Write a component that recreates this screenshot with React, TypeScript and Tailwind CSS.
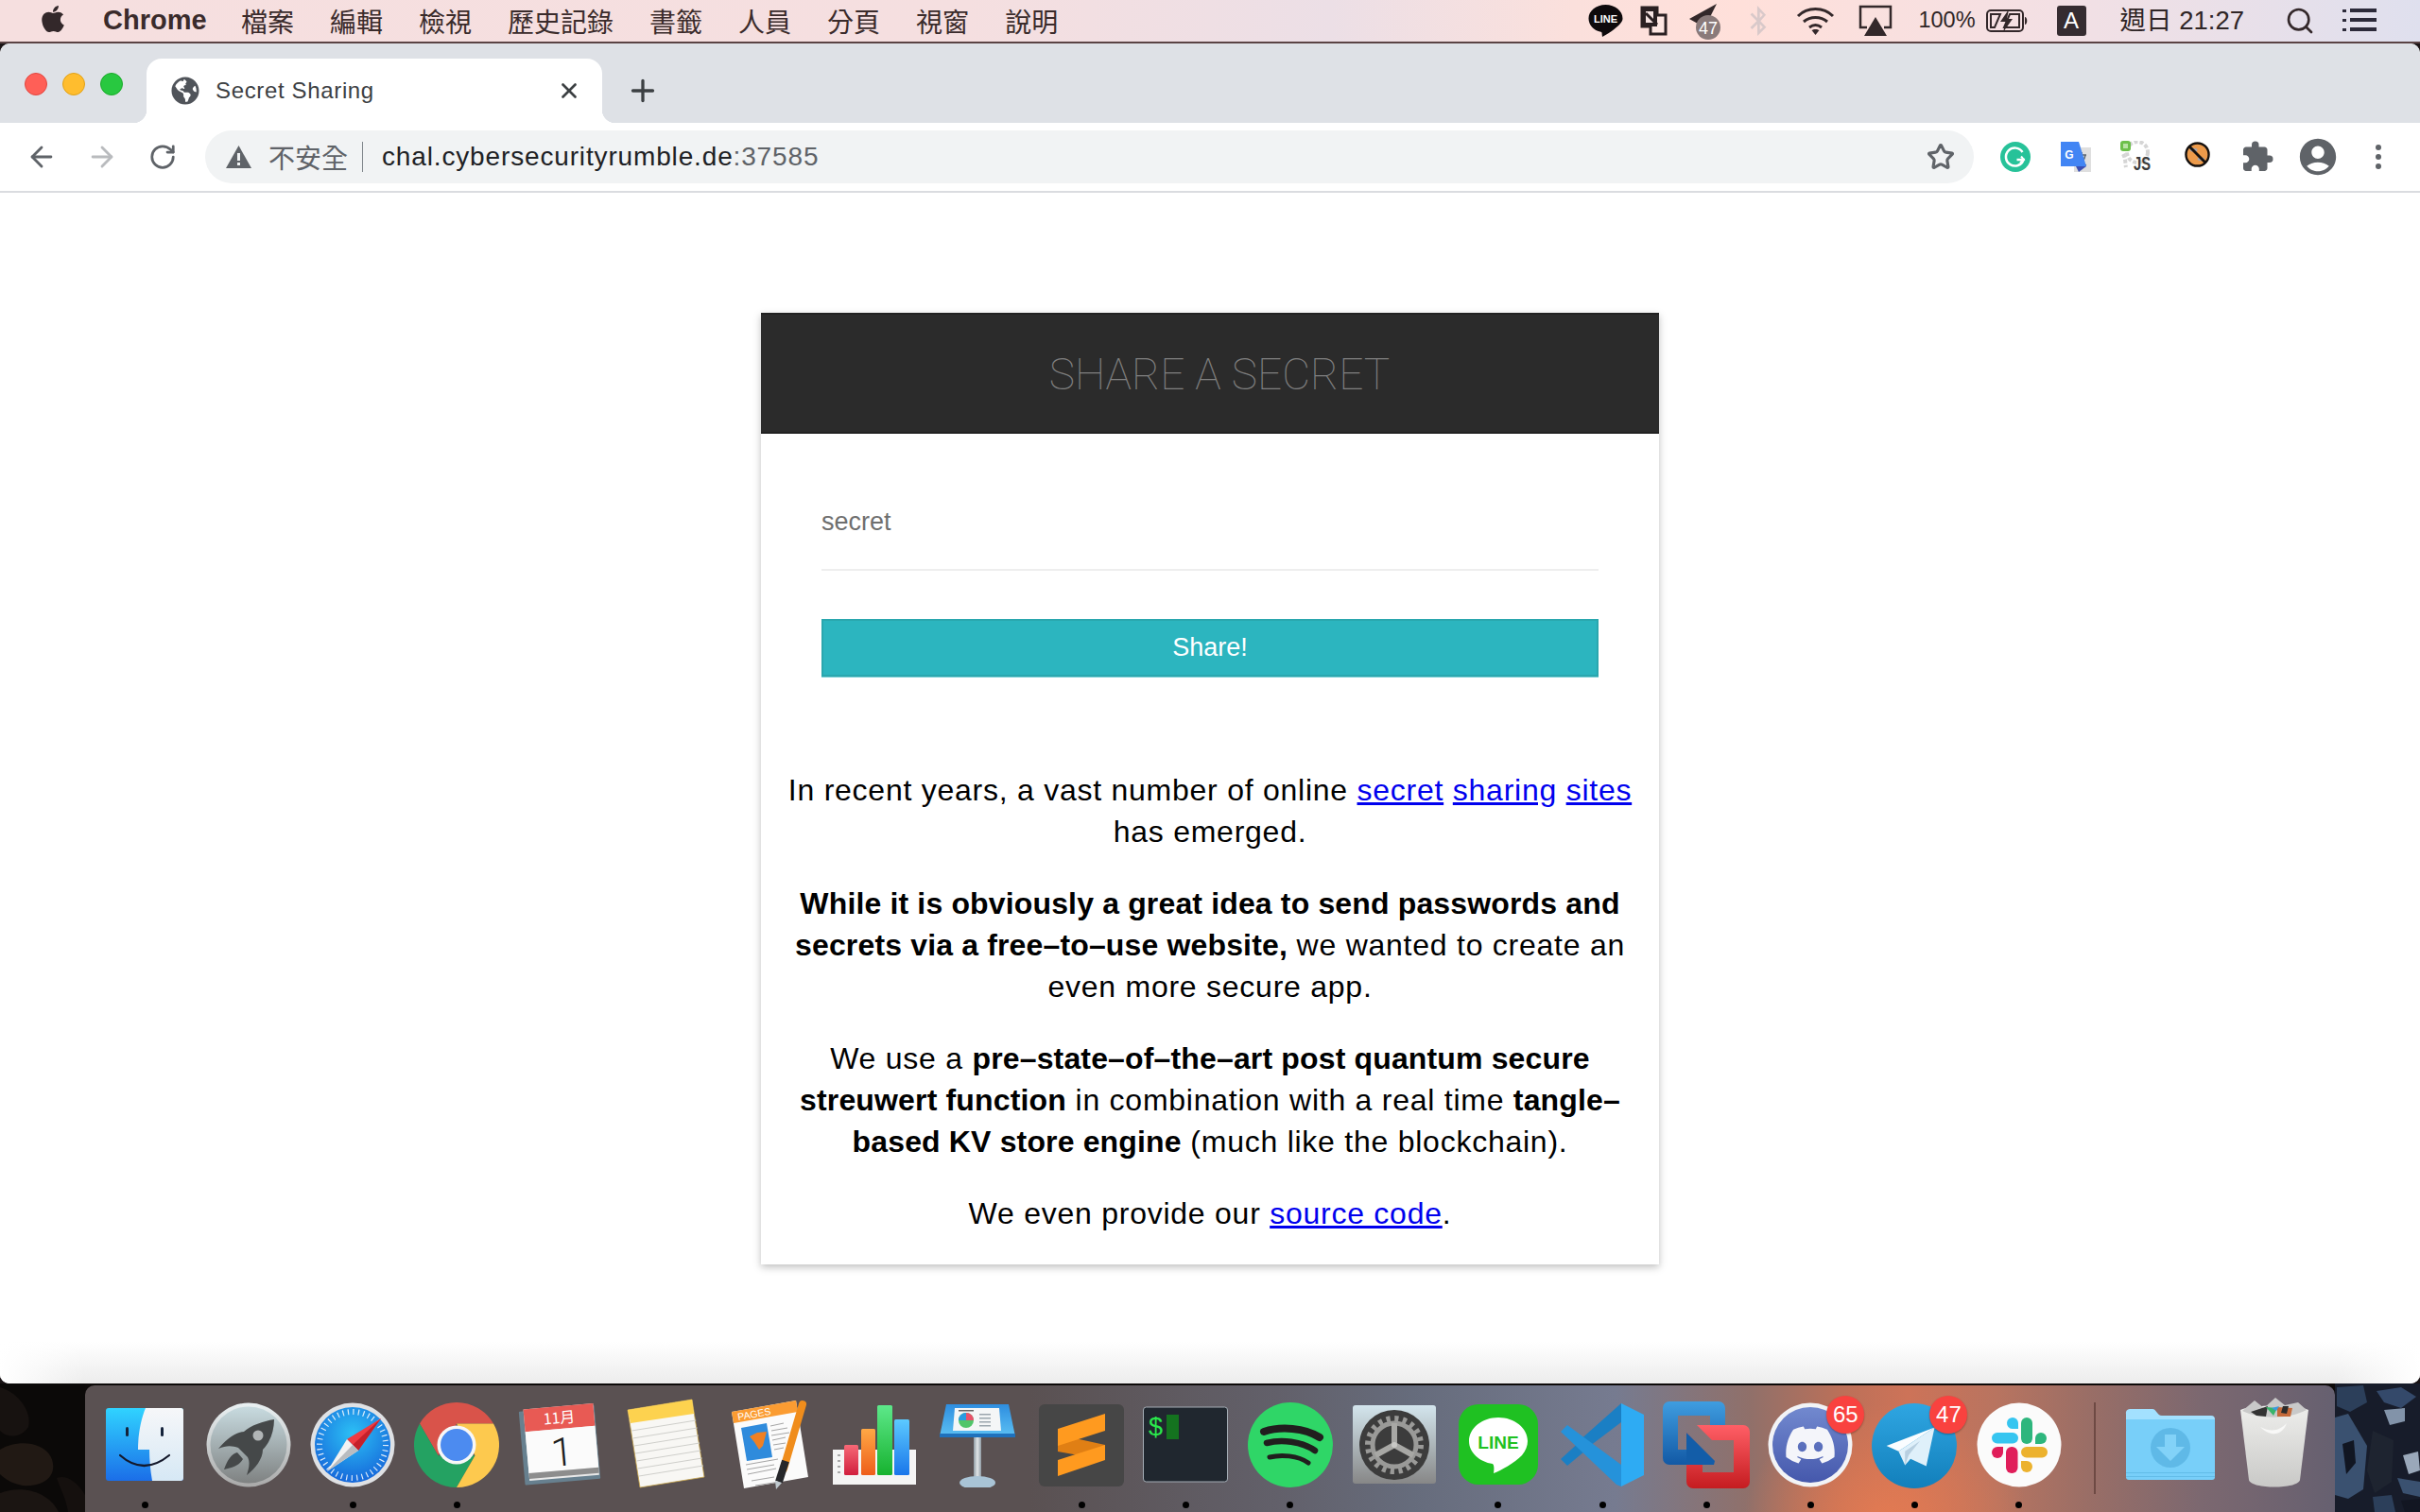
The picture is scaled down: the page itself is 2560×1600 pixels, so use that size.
import React from "react";
import { ArrowLeft, ArrowRight, RotateCw, Star, Plus, X, Search } from "lucide-react";
import { FaApple, FaBluetoothB, FaDiscord, FaGlobeAmericas } from "react-icons/fa";
import { MdAccountCircle, MdExtension } from "react-icons/md";

const menus = ["檔案", "編輯", "檢視", "歷史記錄", "書籤", "人員", "分頁", "視窗", "說明"];

function AppleMenu() {
  return (
    <div className="flex items-center h-full pl-[40px] text-[#3a2b2b]">
      <FaApple size={32} className="text-[#33282a] -mt-[4px]" />
      <span className="ml-[37px] w-[108px] text-[29px] font-bold whitespace-nowrap font-['Liberation_Sans',sans-serif]">Chrome</span>
      <div className="ml-[38px] flex gap-[38px] text-[28px] leading-none font-['Noto_Sans_CJK_TC',sans-serif]">
        {menus.map((m) => (
          <span key={m} className="whitespace-nowrap">{m}</span>
        ))}
      </div>
    </div>
  );
}

function StatusItems() {
  return (
    <div className="flex items-center h-full pr-[46px] text-[#2f2526] font-['Liberation_Sans','Noto_Sans_CJK_TC',sans-serif]">
      <svg width="37" height="36" viewBox="0 0 37 36">
        <path d="M18.5 1C8.5 1 .5 7.5.5 15.500c0 7 5.500 13 13 14.200 1 .2 1.200 1 1.200 3L15 35c4-2 14-8.200 19-14 1.700-2 2.500-3.500 2.500-5.500C36.500 7.500 28.500 1 18.500 1z" fill="#0e0a0c" />
        <text x="18.500" y="20" textAnchor="middle" fontSize="11" fontWeight="700" fill="#fff" fontFamily="Liberation Sans">LINE</text>
      </svg>
      <svg className="ml-[18px]" width="29" height="32" viewBox="0 0 29 32">
        <path d="M2 2h16v8h9v20H11v-8H2z" fill="#fff" fillOpacity=".2" stroke="#2a2022" strokeWidth="3" />
        <path d="M2 2h16v20H2z" fill="#2a2022" />
        <path d="M6 6h8v12H6z" fill="#f5e3e2" />
        <path d="M6 8l12 12" stroke="#2a2022" strokeWidth="3" />
      </svg>
      <svg className="ml-[22px]" width="37" height="40" viewBox="0 0 37 40">
        <path d="M30 2L1 18l9 5 3 9 5-6z" fill="#33282a" />
        <circle cx="21" cy="27" r="13" fill="#8a7a7a" />
        <text x="21" y="34" textAnchor="middle" fontSize="18" fill="#fff" fontFamily="Liberation Sans">47</text>
      </svg>
      <FaBluetoothB size={32} className="ml-[21px] text-[#d9c9ca]" />
      <svg className="ml-[24px]" width="41" height="32" viewBox="0 0 41 32" fill="none" stroke="#33282a" strokeWidth="3">
        <path d="M2 11c10-10 27-10 37 0" />
        <path d="M8 17c7-6 18-6 25 0" />
        <path d="M14 23c4-3 9-3 13 0" />
        <path d="M20.500 31l-4-5c2-1.500 6-1.500 8 0z" fill="#33282a" stroke="none" />
      </svg>
      <svg className="ml-[25px]" width="36" height="34" viewBox="0 0 36 34">
        <path d="M9 24H2V2h32v22h-7" fill="none" stroke="#33282a" strokeWidth="2.500" />
        <path d="M18 13l12 20H6z" fill="#33282a" />
      </svg>
      <span className="ml-[27px] text-[23.5px] whitespace-nowrap">100%</span>
      <svg className="ml-[11px]" width="45" height="26" viewBox="0 0 45 26">
        <rect x="1" y="2" width="38" height="22" rx="4" fill="none" stroke="#33282a" strokeWidth="2" />
        <path d="M5 6H15L9 20H5ZM25 6H35V20H19Z" fill="none" stroke="#33282a" strokeWidth="2" />
        <path d="M41 9c3 0 3 8 0 8z" fill="#33282a" />
        <path d="M24 1L15 14h6l-3 11 10-14h-6z" fill="#33282a" />
      </svg>
      <span className="ml-[30px] w-[31px] h-[32px] rounded-[3px] bg-[#352c30] text-white text-[24px] flex items-center justify-center">A</span>
      <span className="ml-[36px] text-[27.500px] whitespace-nowrap">週日 21:27</span>
      <Search size={32} strokeWidth={2} className="ml-[43px] text-[#33282a]" />
      <svg className="ml-[29px]" width="36" height="26" viewBox="0 0 36 26" fill="#2c2a3a">
        <rect x="0" y="1" width="4" height="3" /><rect x="8" y="0" width="28" height="4" />
        <rect x="0" y="11" width="4" height="3" /><rect x="8" y="10" width="28" height="4" />
        <rect x="0" y="21" width="4" height="3" /><rect x="8" y="20" width="28" height="4" />
      </svg>
    </div>
  );
}

function GrammarlyIcon() {
  return (
    <svg width="32" height="32" viewBox="0 0 32 32">
      <circle cx="16" cy="16" r="16" fill="#27c299" />
      <path d="M23.500 11a9.500 9.500 0 1 0 1 8h-7" fill="none" stroke="#fff" strokeWidth="2.500" />
      <path d="M22 15.500l3 3.500-4 3" fill="none" stroke="#fff" strokeWidth="2" />
    </svg>
  );
}

function TranslateIcon() {
  return (
    <svg width="32" height="32" viewBox="0 0 32 32">
      <rect x="14" y="6" width="18" height="26" fill="#dfdfdf" />
      <path d="M22 11v3m-5 0h10m-8 11c4-3 6-6 7-11m-6 4c2 3 4 6 7 7" stroke="#5c6670" strokeWidth="1.500" fill="none" />
      <path d="M0 0h19l8 26H0z" fill="#4285f4" />
      <path d="M16 26h11l-8 6z" fill="#3b4fb3" />
      <text x="9" y="18" textAnchor="middle" fontSize="12" fontWeight="700" fill="#fff" fontFamily="Liberation Sans">G</text>
    </svg>
  );
}

function JsIcon() {
  return (
    <svg width="34" height="34" viewBox="0 0 34 34">
      <circle cx="18" cy="12" r="11" fill="none" stroke="#d5d5d5" strokeWidth="4" strokeDasharray="4 2" />
      <path d="M3 14c3 6 2 10 3 14" stroke="#d5d5d5" strokeWidth="4" fill="none" strokeDasharray="4 2" />
      <rect x="0" y="0" width="11" height="11" rx="3" fill="#6cc04a" />
      <rect x="3" y="3" width="5" height="5" fill="#b9e3a5" />
      <text x="14" y="31" fontSize="20" fontWeight="700" fill="#3c3c3c" fontFamily="Liberation Sans" textLength="18" lengthAdjust="spacingAndGlyphs">JS</text>
    </svg>
  );
}

function BlockIcon() {
  return (
    <svg width="27" height="27" viewBox="0 0 28 28" className="-mt-[5px]">
      <circle cx="14" cy="14" r="12.500" fill="#ec9a4a" stroke="#15110f" strokeWidth="2.500" />
      <ellipse cx="10" cy="9" rx="4" ry="2" fill="#a5a5ad" />
      <ellipse cx="18" cy="19" rx="4" ry="2" fill="#a5a5ad" />
      <path d="M5 5l18 18" stroke="#15110f" strokeWidth="3" />
    </svg>
  );
}

function DotsMenu() {
  return (
    <svg width="8" height="28" viewBox="0 0 8 28" fill="#5f6368">
      <circle cx="4" cy="4" r="3" /><circle cx="4" cy="14" r="3" /><circle cx="4" cy="24" r="3" />
    </svg>
  );
}

function TabStrip() {
  return (
    <div className="h-[84px] bg-[#dee1e6] flex rounded-t-[10px]">
      <div className="w-[155px] pl-[26px] pt-[2px] flex items-center gap-[16px]">
        <span className="w-[24px] h-[24px] rounded-full bg-[#ff5f57] border border-[#e2463f]" />
        <span className="w-[24px] h-[24px] rounded-full bg-[#ffbd2e] border border-[#e1a116]" />
        <span className="w-[24px] h-[24px] rounded-full bg-[#28c840] border border-[#1aab29]" />
      </div>
      <div className="mt-[16px] h-[68px] w-[482px] relative bg-white rounded-t-[16px] flex items-center pl-[26px] pr-[22px] font-['Liberation_Sans',sans-serif]">
        <span className="absolute bottom-0 -left-[14px] w-[14px] h-[14px] bg-[radial-gradient(circle_at_0_0,transparent_14px,white_14.500px)]" />
        <span className="absolute bottom-0 -right-[14px] w-[14px] h-[14px] bg-[radial-gradient(circle_at_100%_0,transparent_14px,white_14.500px)]" />
        <FaGlobeAmericas size={30} className="text-[#50545a] shrink-0" />
        <span className="ml-[17px] text-[24px] tracking-[0.65px] text-[#3c4043] whitespace-nowrap">Secret Sharing</span>
        <X size={26} strokeWidth={2.500} className="ml-auto text-[#3c4043]" />
      </div>
      <div className="mt-[16px] h-[68px] ml-[25px] flex items-center">
        <Plus size={36} strokeWidth={2.200} className="text-[#3c4043]" />
      </div>
    </div>
  );
}

function NavSlot({ children }: { children: React.ReactNode }) {
  return <div className="w-[64px] h-full flex items-center justify-center shrink-0">{children}</div>;
}

function Toolbar() {
  return (
    <div className="h-[74px] bg-white border-b-2 border-[#dadce0] flex items-center pl-[12px] shrink-0">
      <NavSlot><ArrowLeft size={34} strokeWidth={2} className="text-[#5f6368]" /></NavSlot>
      <NavSlot><ArrowRight size={34} strokeWidth={2} className="text-[#b9bbbe]" /></NavSlot>
      <NavSlot><RotateCw size={30} strokeWidth={2.200} className="text-[#5f6368]" /></NavSlot>
      <div className="ml-[13px] w-[1871px] h-[56px] rounded-full bg-[#f1f3f4] flex items-center pl-[22px] pr-[20px] font-['Liberation_Sans','Noto_Sans_CJK_TC',sans-serif] text-[28px]">
        <svg width="27" height="24" viewBox="0 0 27 24"><path d="M13.500 0L27 24H0z" fill="#5f6368" /><rect x="12" y="8" width="3" height="8" fill="#f1f3f4" /><rect x="12" y="18" width="3" height="3" fill="#f1f3f4" /></svg>
        <span className="ml-[18px] text-[#5f6368] whitespace-nowrap font-['Noto_Sans_CJK_TC',sans-serif] leading-none">不安全</span>
        <span className="ml-[15px] w-[1px] h-[32px] bg-[#80868b]" />
        <span className="ml-[20px] text-[#202124] whitespace-nowrap tracking-[0.85px]">chal.cybersecurityrumble.de<span className="text-[#5f6368]">:37585</span></span>
        <Star size={30} strokeWidth={2.500} className="ml-auto text-[#5f6368]" />
      </div>
      <div className="ml-[12px] flex items-center">
        <NavSlot><GrammarlyIcon /></NavSlot>
        <NavSlot><TranslateIcon /></NavSlot>
        <NavSlot><JsIcon /></NavSlot>
        <NavSlot><BlockIcon /></NavSlot>
        <NavSlot><MdExtension size={36} className="text-[#5f6368]" /></NavSlot>
        <NavSlot><MdAccountCircle size={46} className="text-[#5f6368]" /></NavSlot>
        <NavSlot><DotsMenu /></NavSlot>
      </div>
    </div>
  );
}

function Card() {
  return (
    <div className="mt-[127px] w-[950px] bg-white shadow-[0_3px_8px_rgba(0,0,0,0.25)] font-['Liberation_Sans',sans-serif]">
      <div className="h-[128px] bg-[#2b2b2b] border-y-2 border-[#222222] flex items-center justify-center pl-[20px] pt-[2px]">
        <h1 className="text-[46px] font-thin text-[#808080] font-['Roboto',sans-serif] whitespace-nowrap">SHARE A SECRET</h1>
      </div>
      <form className="px-[64px] pt-[59px]">
        <div className="h-[86px] border-b-2 border-[#eeeeee]">
          <div className="h-[68px] flex items-center text-[27px] text-[#6f6f6f]">secret</div>
        </div>
        <div className="mt-[51px] h-[61px] bg-[#2cb5bf] border-2 border-[#2aa7ae] shadow-[0_1px_0_#7fd0d6] flex items-center justify-center text-white text-[27px]">Share!</div>
      </form>
      <div className="pt-[66px] px-[26px] pb-[32px] text-center text-[32px] leading-[44px] text-black tracking-[0.75px]">
        <p className="mt-[32px]">
          In recent years, a vast number of online{" "}
          <a className="text-[#0000ee] underline" href="#a">secret</a>{" "}
          <a className="text-[#0000ee] underline" href="#b">sharing</a>{" "}
          <a className="text-[#0000ee] underline" href="#c">sites</a> has emerged.
        </p>
        <p className="mt-[32px]">
          <b className="tracking-[0.15px]">While it is obviously a great idea to send passwords and secrets via a free–to–use website,</b> we wanted to create an even more secure app.
        </p>
        <p className="mt-[32px]">
          We use a <b className="tracking-[0.15px]">pre–state–of–the–art post quantum secure streuwert function</b> in combination with a real time <b className="tracking-[0.15px]">tangle–based KV store engine</b> (much like the blockchain).
        </p>
        <p className="mt-[32px]">
          We even provide our <a className="text-[#0000ee] underline" href="#d">source code</a>.
        </p>
      </div>
    </div>
  );
}

/* ---------- dock icons: each one is a 90x90 drawing ---------- */
function Finder() {
  return (
    <svg width="90" height="90" viewBox="0 0 90 90">
      <defs>
        <linearGradient id="fb" x1="0" y1="0" x2="0" y2="1"><stop offset="0" stopColor="#30d3ff" /><stop offset="1" stopColor="#1b6ee8" /></linearGradient>
        <linearGradient id="fw" x1="0" y1="0" x2="0" y2="1"><stop offset="0" stopColor="#f6f7f9" /><stop offset="1" stopColor="#d6e8f5" /></linearGradient>
      </defs>
      <rect x="4" y="6" width="82" height="77" rx="3" fill="url(#fb)" />
      <path d="M46 6H83a3 3 0 0 1 3 3V80a3 3 0 0 1-3 3H53C51 72 50 60 50 50H38C38 34 41 18 46 6Z" fill="url(#fw)" />
      <rect x="25" y="26" width="3" height="10" rx="1.500" fill="#14223a" />
      <rect x="62" y="26" width="3" height="10" rx="1.500" fill="#14223a" />
      <path d="M19 56Q44 78 71 56" fill="none" stroke="#14182a" strokeWidth="2.200" strokeLinecap="round" />
    </svg>
  );
}

function Launchpad() {
  return (
    <svg width="90" height="90" viewBox="0 0 90 90">
      <defs>
        <linearGradient id="lo" x1="0" y1="0" x2="0" y2="1"><stop offset="0" stopColor="#eaf1f3" /><stop offset="1" stopColor="#a9a9a9" /></linearGradient>
        <linearGradient id="li" x1="0" y1="0" x2="0" y2="1"><stop offset="0" stopColor="#c8dbe0" /><stop offset="1" stopColor="#7f8282" /></linearGradient>
      </defs>
      <circle cx="45" cy="45" r="44.500" fill="url(#lo)" />
      <circle cx="45" cy="45" r="40.500" fill="url(#li)" />
      <path d="M72 18C60 20 48 24 40 31C32 31 22 38 13 49C22 45 28 46 34 48L44 58C47 64 45 70 43 77C52 70 60 60 60 50C68 42 72 30 72 18Z" fill="#454849" />
      <path d="M33 53C27 54 22 62 19 71C28 69 35 67 39 60Z" fill="#454849" />
      <circle cx="55" cy="35" r="5.500" fill="#b1b5b6" />
    </svg>
  );
}

function Safari() {
  return (
    <svg width="90" height="90" viewBox="0 0 90 90">
      <defs>
        <radialGradient id="sb" cx=".5" cy=".35" r=".7"><stop offset="0" stopColor="#2cc0f5" /><stop offset="1" stopColor="#1461d8" /></radialGradient>
      </defs>
      <circle cx="45" cy="45" r="44.500" fill="#dfe1e4" />
      <circle cx="45" cy="45" r="40" fill="url(#sb)" />
      <circle cx="45" cy="45" r="35" fill="none" stroke="#fff" strokeOpacity=".85" strokeWidth="6" strokeDasharray="1.200 4.300" />
      <path d="M75 17L39 39L51 51Z" fill="#ee3b42" />
      <path d="M75 17L45 45L51 51Z" fill="#c5202a" />
      <path d="M18 73L39 39L51 51Z" fill="#f2f2f2" />
      <path d="M18 73L45 45L51 51Z" fill="#b9bcc0" />
    </svg>
  );
}

function ChromeIcon() {
  return (
    <svg width="90" height="90" viewBox="0 0 90 90">
      <path d="M45 0A45 45 0 0 1 84 22.500H45L25.500 56.250L6 22.500A45 45 0 0 1 45 0Z" fill="#d9534a" />
      <path d="M6 22.500A45 45 0 0 0 45 90L64.500 56.250H25.500Z" fill="#24a262" />
      <path d="M84 22.500A45 45 0 0 1 45 90L64.500 56.250L45 22.500Z" fill="#fdc94e" />
      <circle cx="45" cy="45" r="20.500" fill="#f7f7f7" />
      <circle cx="45" cy="45" r="17" fill="#4c8bf0" />
    </svg>
  );
}

function Calendar() {
  return (
    <svg width="90" height="90" viewBox="0 0 90 90" className="overflow-visible">
      <g transform="rotate(-5 45 45)">
        <rect x="3" y="6" width="80" height="78" rx="1" fill="#67808f" />
        <rect x="8" y="4" width="74" height="76" fill="#e9e9e9" />
        <rect x="8" y="4" width="74" height="24" fill="#e85a54" />
        <text x="45" y="22" textAnchor="middle" fontSize="16" fill="#fff" fontFamily="Noto Sans CJK TC">11月</text>
        <rect x="8" y="28" width="74" height="44" fill="#fbfbfb" />
        <text x="45" y="67" textAnchor="middle" fontSize="42" fontWeight="300" fill="#1d1d1d" fontFamily="Roboto">1</text>
        <rect x="8" y="72" width="74" height="6" fill="#8d8d8d" />
      </g>
    </svg>
  );
}

function Notes() {
  const ys = [30, 38, 46, 54, 62, 70, 78];
  return (
    <svg width="90" height="90" viewBox="0 0 90 90" className="overflow-visible">
      <path d="M5 8L73 -3L86 79L18 90Z" fill="#f8f7f4" stroke="#c8a548" strokeWidth=".8" />
      <path d="M5 8L73 -3L75 12L8 22Z" fill="#fdd24f" />
      {ys.map((y) => (
        <path key={y} d={`M${8 + (y - 22) * 0.16} ${y}L${76 + (y - 22) * 0.16} ${y - 11}`} stroke="#cfcfcb" strokeWidth="1" />
      ))}
    </svg>
  );
}

function Pages() {
  return (
    <svg width="90" height="90" viewBox="0 0 90 90" className="overflow-visible">
      <path d="M5 10L73 -2L86 79L18 91Z" fill="#fbfbfb" />
      <path d="M5 10L73 -2L75 10L7 22Z" fill="#fb9c32" />
      <text x="0" y="0" transform="translate(12 19) rotate(-10)" fontSize="10.500" fill="#fff" fontFamily="Liberation Sans">PAGES</text>
      <path d="M15 27L42 22L48 58L21 62Z" fill="#2f8bdc" />
      <path d="M32 32L42 31L38 46L34 50L29 42L24 36Z" fill="#ef8023" />
      <g stroke="#a5a5a5" strokeWidth="1">
        <path d="M46 25L60 22M47 30L64 27M47 35L66 32M48 40L62 37M49 45L62 43M50 50L60 48" />
        <path d="M20 66L54 60M21 71L50 66M22 76L52 70M26 83L50 79M30 88L56 84" />
      </g>
      <path d="M80 2L60 70" stroke="#f08d1c" strokeWidth="8" strokeLinecap="round" />
      <path d="M62 62L55 84" stroke="#26272a" strokeWidth="8" />
      <path d="M51 83L58 85L52 92Z" fill="#bfc9cf" />
    </svg>
  );
}

function Numbers() {
  return (
    <svg width="90" height="90" viewBox="0 0 90 90">
      <defs>
        <linearGradient id="n1" x1="0" y1="0" x2="0" y2="1"><stop offset="0" stopColor="#f66876" /><stop offset="1" stopColor="#d11f3d" /></linearGradient>
        <linearGradient id="n2" x1="0" y1="0" x2="0" y2="1"><stop offset="0" stopColor="#ffa845" /><stop offset="1" stopColor="#ee5e1a" /></linearGradient>
        <linearGradient id="n3" x1="0" y1="0" x2="0" y2="1"><stop offset="0" stopColor="#5de88a" /><stop offset="1" stopColor="#17b22f" /></linearGradient>
        <linearGradient id="n4" x1="0" y1="0" x2="0" y2="1"><stop offset="0" stopColor="#5ccaff" /><stop offset="1" stopColor="#1a76ea" /></linearGradient>
      </defs>
      <rect x="2" y="50" width="88" height="37" fill="#f4f4f4" />
      <g fill="#a8a8a8"><rect x="7" y="55" width="3" height="2" /><rect x="7" y="61" width="3" height="2" /><rect x="7" y="67" width="3" height="2" /><rect x="7" y="73" width="3" height="2" /></g>
      <rect x="14" y="45" width="15" height="32" rx="1.500" fill="url(#n1)" />
      <rect x="32" y="28" width="15" height="49" rx="1.500" fill="url(#n2)" />
      <rect x="49" y="3" width="16" height="74" rx="1.500" fill="url(#n3)" />
      <rect x="67" y="18" width="16" height="59" rx="1.500" fill="url(#n4)" />
    </svg>
  );
}

function Keynote() {
  return (
    <svg width="90" height="90" viewBox="0 0 90 90">
      <defs>
        <linearGradient id="k1" x1="0" y1="0" x2="0" y2="1"><stop offset="0" stopColor="#2e8ee0" /><stop offset="1" stopColor="#5cc0f3" /></linearGradient>
        <linearGradient id="k2" x1="0" y1="0" x2="1" y2="0"><stop offset="0" stopColor="#8e9aa3" /><stop offset=".5" stopColor="#e2e6e8" /><stop offset="1" stopColor="#8e9aa3" /></linearGradient>
      </defs>
      <rect x="41" y="37" width="8" height="44" fill="url(#k2)" />
      <ellipse cx="45" cy="85" rx="19" ry="7" fill="#a9c4d6" />
      <path d="M12 2H78L85 36H5Z" fill="url(#k1)" />
      <rect x="5" y="33" width="80" height="4" fill="#1f71bc" />
      <path d="M21 6H68L70 30H19Z" fill="#f4f6f7" />
      <circle cx="33" cy="19" r="8" fill="#50c56a" />
      <path d="M33 19V11A8 8 0 0 0 25 19Z" fill="#2a9ae0" />
      <path d="M33 19V11A8 8 0 0 1 41 19Z" fill="#e8516a" />
      <g fill="#9aa5ad"><rect x="47" y="12" width="12" height="1.500" /><rect x="47" y="16" width="12" height="1.500" /><rect x="47" y="20" width="12" height="1.500" /><rect x="47" y="24" width="12" height="1.500" /></g>
      <rect x="25" y="8" width="16" height="1.500" fill="#666" />
    </svg>
  );
}

function Sublime() {
  return (
    <svg width="90" height="90" viewBox="0 0 90 90">
      <rect x="0" y="2" width="90" height="87" rx="6" fill="#464646" />
      <path d="M20 34L70 45V61L20 52Z" fill="#e07f14" />
      <path d="M20 28L70 12V30L20 46Z" fill="#ff9a1f" />
      <path d="M20 61L70 45V61L20 78Z" fill="#ff9a1f" />
    </svg>
  );
}

function Terminal() {
  return (
    <svg width="90" height="90" viewBox="0 0 90 90">
      <rect x=".5" y="5" width="89" height="79" rx="3" fill="#20272f" stroke="#a4adb5" />
      <text x="6" y="35" fontSize="27" fill="#2ae84c" fontFamily="Liberation Sans">$</text>
      <rect x="25" y="13" width="13" height="26" fill="#14731f" />
    </svg>
  );
}

function Spotify() {
  return (
    <svg width="90" height="90" viewBox="0 0 90 90">
      <circle cx="45" cy="45" r="45" fill="#2fd667" />
      <g fill="none" stroke="#211e1e" strokeLinecap="round">
        <path d="M17 31C35 25 60 27 76 37" strokeWidth="8" />
        <path d="M20 43C35 39 57 41 71 51" strokeWidth="6.500" />
        <path d="M23 58C35 55 53 56 64 64" strokeWidth="5" />
      </g>
    </svg>
  );
}

function Preferences() {
  return (
    <svg width="90" height="90" viewBox="0 0 90 90">
      <defs>
        <linearGradient id="pf" x1="0" y1="0" x2="0" y2="1"><stop offset="0" stopColor="#d3e5ed" /><stop offset="1" stopColor="#878787" /></linearGradient>
      </defs>
      <rect x="1" y="3" width="88" height="83" rx="3" fill="url(#pf)" />
      <circle cx="45" cy="45" r="37" fill="#3c3c3c" />
      <circle cx="45" cy="45" r="28" fill="none" stroke="#9a9a98" strokeWidth="6" strokeDasharray="4.200 4.600" />
      <circle cx="45" cy="45" r="23" fill="none" stroke="#9a9a98" strokeWidth="5" />
      <g stroke="#a8a8a5" strokeWidth="6"><path d="M45 45V22" /><path d="M45 45L65 56" /><path d="M45 45L25 56" /></g>
      <circle cx="45" cy="45" r="3" fill="#c8c8c5" />
    </svg>
  );
}

function LineApp() {
  return (
    <svg width="90" height="90" viewBox="0 0 90 90">
      <rect x="3" y="2" width="84" height="85" rx="21" fill="#1fc122" />
      <path d="M45 16C28 16 14 27 14 41C14 53 25 63 39 65C40 66 41 68 40 75C48 72 62 64 70 56C74 51 76 46 76 41C76 27 62 16 45 16Z" fill="#fff" />
      <text x="45" y="49" textAnchor="middle" fontSize="19" fontWeight="700" fill="#1fc122" fontFamily="Liberation Sans">LINE</text>
    </svg>
  );
}

function VSCode() {
  return (
    <svg width="90" height="90" viewBox="0 0 90 90">
      <path d="M65 1L20 41L28 49L65 21Z" fill="#1a7fc4" />
      <path d="M1 60L8 67L32 47L24 39Z" fill="#1a7fc4" />
      <path d="M1 31L8 24L65 66V89L60 87Z" fill="#2592da" />
      <path d="M65 1L89 13V77L65 89Z" fill="#2eabf3" />
    </svg>
  );
}

function Fusion() {
  return (
    <svg width="90" height="90" viewBox="0 0 90 90" className="overflow-visible">
      <defs>
        <linearGradient id="fu1" x1="0" y1="0" x2="0" y2="1"><stop offset="0" stopColor="#3f9de0" /><stop offset="1" stopColor="#1259a5" /></linearGradient>
        <linearGradient id="fu2" x1="0" y1="0" x2="0" y2="1"><stop offset="0" stopColor="#ff5f66" /><stop offset="1" stopColor="#c51c20" /></linearGradient>
      </defs>
      <path fillRule="evenodd" d="M6-1H58a7 7 0 0 1 7 7V24H49V14H15V50H24V66H6a7 7 0 0 1-7-7V6a7 7 0 0 1 7-7Z" fill="url(#fu1)" />
      <path fillRule="evenodd" d="M35 24H84a7 7 0 0 1 7 7V84a7 7 0 0 1-7 7H31a7 7 0 0 1-7-7V32L43 52H41V74H74V40H51Z" fill="url(#fu2)" />
      <path d="M24 32L54 62L53 66H24Z" fill="#135da8" />
    </svg>
  );
}

function Discord() {
  return (
    <svg width="90" height="90" viewBox="0 0 90 90">
      <defs><linearGradient id="dc" x1="0" y1="0" x2="0" y2="1"><stop offset="0" stopColor="#7289cf" /><stop offset="1" stopColor="#4558ac" /></linearGradient></defs>
      <circle cx="45" cy="45" r="44.500" fill="#f2f3f6" />
      <circle cx="45" cy="45" r="40" fill="url(#dc)" />
      <FaDiscord x={17} y={17} size={56} color="#f4f5fa" />
    </svg>
  );
}

function Telegram() {
  return (
    <svg width="92" height="92" viewBox="0 0 92 92">
      <defs><linearGradient id="tg" x1="0" y1="0" x2="0" y2="1"><stop offset="0" stopColor="#2fa6e2" /><stop offset="1" stopColor="#127fbb" /></linearGradient></defs>
      <circle cx="46" cy="46" r="46" fill="url(#tg)" />
      <path d="M68 26L16 46L29 52L68 26Z" fill="#fafdff" />
      <path d="M68 26L29 52L36 67L42 60L59 68Z" fill="#dff0fa" />
      <path d="M36 67L36 52L52 41L40 56Z" fill="#b8cfe0" />
    </svg>
  );
}

function Slack() {
  return (
    <svg width="90" height="90" viewBox="0 0 90 90">
      <circle cx="45" cy="45" r="44.500" fill="#fbfbfb" />
      <rect x="16" y="32" width="28" height="11.500" rx="5.750" fill="#36c5f0" />
      <path d="M44 28H37.500A6 6 0 1 1 44 22Z" fill="#36c5f0" />
      <rect x="47" y="16" width="12" height="28" rx="6" fill="#2eb67d" />
      <path d="M62 44V38A6 6 0 1 1 68 44Z" fill="#2eb67d" />
      <rect x="47" y="47" width="28" height="11.500" rx="5.750" fill="#ecb22e" />
      <path d="M47 62H53A6 6 0 1 1 47 68Z" fill="#ecb22e" />
      <rect x="31" y="47" width="12.500" height="28" rx="6" fill="#e01e5a" />
      <path d="M28 47V53A6 6 0 1 1 22 47Z" fill="#e01e5a" />
    </svg>
  );
}

function DownloadsFolder() {
  return (
    <svg width="90" height="90" viewBox="0 0 90 90" className="overflow-visible">
      <path d="M-2 12A4 4 0 0 1 2 7H26C30 7 31 14 36 14H88A4 4 0 0 1 92 18V30H-2Z" fill="#a3e1ff" />
      <path d="M-2 18H92V79A3 3 0 0 1 89 82H1A3 3 0 0 1-2 79Z" fill="#78cff9" />
      <rect x="-2" y="74" width="94" height="1" fill="#61bce8" />
      <rect x="-2" y="78" width="94" height="1" fill="#61bce8" />
      <circle cx="45" cy="48" r="21" fill="#5fb9e7" />
      <path d="M39 34H51V47H60L45 62L30 47H39Z" fill="#82d2f8" />
    </svg>
  );
}

function Trash() {
  return (
    <svg width="90" height="90" viewBox="0 0 90 90" className="overflow-visible">
      <defs><linearGradient id="tr" x1="0" y1="0" x2="0" y2="1"><stop offset="0" stopColor="#eeeeec" /><stop offset="1" stopColor="#c9c9c7" /></linearGradient></defs>
      <path d="M9 8C20 2 70 2 81 8L72 82C70 92 20 92 18 82Z" fill="url(#tr)" />
      <path d="M11 9L24 -2L34 6L46 -5L56 3L70 0L79 8C60 18 30 18 11 9Z" fill="#c9c9c9" />
      <path d="M20 10L38 4L36 15L26 14Z" fill="#333" />
      <path d="M36 5L48 6L44 14Z" fill="#39b56a" />
      <path d="M48 5L64 6L62 15L48 15Z" fill="#c56a3a" />
      <path d="M42 6L50 4L47 9Z" fill="#3a9be0" />
      <path d="M54 4L60 4L58 12L52 11Z" fill="#2b2b2b" />
      <path d="M30 26C42 32 50 30 58 22C54 34 42 38 30 26Z" fill="#f8f8f7" />
    </svg>
  );
}

type SlotProps = { running?: boolean; badge?: string; badgeLeft?: "d" | "t"; children: React.ReactNode };

function Slot({ running, badge, badgeLeft, children }: SlotProps) {
  return (
    <div className="relative w-[110.15px] shrink-0 pt-[18px] flex flex-col items-center">
      <div className="w-[90px] h-[90px] flex justify-center">{children}</div>
      {running && <span className="mt-[15px] w-[7px] h-[7px] rounded-full bg-black" />}
      {badge && (
        <span className={badgeLeft === "d"
          ? "absolute left-[72px] top-[11px] w-[40px] h-[40px] rounded-full bg-[#f9423f] text-white text-[24px] flex items-center justify-center shadow-[0_1px_2px_rgba(0,0,0,0.3)] font-['Liberation_Sans',sans-serif]"
          : "absolute left-[71px] top-[11px] w-[40px] h-[40px] rounded-full bg-[#f9423f] text-white text-[24px] flex items-center justify-center shadow-[0_1px_2px_rgba(0,0,0,0.3)] font-['Liberation_Sans',sans-serif]"}>
          {badge}
        </span>
      )}
    </div>
  );
}

function Dock() {
  return (
    <div className="w-[2380px] h-[134px] pl-[8px] pr-[4px] flex rounded-t-[10px] bg-[radial-gradient(ellipse_150px_120px_at_1905px_140px,#e27a52,transparent),linear-gradient(to_right,#5a5152_0%,#5a5152_42%,#62606a_53%,#666c7c_59%,#767b90_68%,#90706a_74%,#bb7059_78%,#cd7358_81%,#b87460_85%,#9a6e66_89%,#7c6870_94%,#666070_100%)]">
      <Slot running><Finder /></Slot>
      <Slot><Launchpad /></Slot>
      <Slot running><Safari /></Slot>
      <Slot running><ChromeIcon /></Slot>
      <Slot><Calendar /></Slot>
      <Slot><Notes /></Slot>
      <Slot><Pages /></Slot>
      <Slot><Numbers /></Slot>
      <Slot><Keynote /></Slot>
      <Slot running><Sublime /></Slot>
      <Slot running><Terminal /></Slot>
      <Slot running><Spotify /></Slot>
      <Slot><Preferences /></Slot>
      <Slot running><LineApp /></Slot>
      <Slot running><VSCode /></Slot>
      <Slot running><Fusion /></Slot>
      <Slot running badge="65" badgeLeft="d"><Discord /></Slot>
      <Slot running badge="47" badgeLeft="t"><Telegram /></Slot>
      <Slot running><Slack /></Slot>
      <div className="w-[50px] shrink-0 flex justify-center pt-[18px]">
        <span className="w-[2px] h-[97px] bg-[#6e4a44]" />
      </div>
      <Slot><DownloadsFolder /></Slot>
      <Slot><Trash /></Slot>
    </div>
  );
}

function WallLeft() {
  return (
    <svg width="90" height="136" viewBox="0 0 90 136" className="shrink-0">
      <rect width="90" height="136" fill="#0b0908" />
      <path d="M0 4C20 10 34 30 30 46C22 58 8 58 0 50Z" fill="#171210" />
      <path d="M0 70C16 60 44 60 54 78C62 96 48 110 24 108C12 106 4 100 0 96Z" fill="#211914" />
      <path d="M0 116C20 108 50 112 62 136H0Z" fill="#1b1512" />
      <path d="M60 100C70 96 82 104 90 118V136H72C70 122 64 112 60 100Z" fill="#15100e" />
    </svg>
  );
}

function WallRight() {
  return (
    <svg width="90" height="136" viewBox="0 0 90 136" className="shrink-0">
      <rect width="90" height="136" fill="#171c2a" />
      <path d="M2 4L30 2L34 20L16 30L2 24Z" fill="#2c3f5a" />
      <path d="M44 8L70 4L86 14L70 26L52 20Z" fill="#34496a" />
      <path d="M52 28L74 26L74 40L58 44Z" fill="#8293a9" />
      <path d="M0 36L14 32L34 66L30 112L14 122L0 118Z" fill="#3a5170" />
      <path d="M8 64L20 60L22 84L12 96Z" fill="#111622" />
      <path d="M40 50L62 60L60 104L42 116L34 92Z" fill="#1e2430" />
      <path d="M72 76L88 72L90 92L78 96Z" fill="#9aa8ba" />
      <path d="M66 100L90 104V120L72 116Z" fill="#3a5170" />
      <path d="M40 120L60 118L64 136H42Z" fill="#2c3f5a" />
      <path d="M70 124L90 122V136H74Z" fill="#121622" />
    </svg>
  );
}

export default function App() {
  return (
    <div className="w-[2560px] h-[1600px] overflow-hidden flex flex-col bg-[#1a1416]">
      <div className="h-[46px] shrink-0 flex justify-between border-b-2 border-[#5a4344] bg-[linear-gradient(to_right,#f6dfdf_0%,#f5dfe0_40%,#ecdfe6_55%,#fbe0dc_65%,#ffe0da_72%,#f3e0e4_85%,#dfe0ee_100%)]">
        <AppleMenu />
        <StatusItems />
      </div>
      <div className="h-[1418px] shrink-0 flex flex-col rounded-[10px] overflow-hidden bg-white">
        <TabStrip />
        <Toolbar />
        <div className="flex-1 flex flex-col items-center">
          <Card />
        </div>
        <div className="h-[44px] shrink-0 relative bg-[linear-gradient(to_bottom,#ffffff,#ececec)]">
          <span className="absolute left-0 top-0 bottom-0 w-[90px] bg-[linear-gradient(to_right,#ffffff,transparent)]" />
          <span className="absolute right-0 top-0 bottom-0 w-[90px] bg-[linear-gradient(to_left,#ffffff,transparent)]" />
        </div>
      </div>
      <div className="flex h-[136px] shrink-0">
        <WallLeft />
        <div className="pt-[2px] bg-[#0d0a09]"><Dock /></div>
        <WallRight />
      </div>
    </div>
  );
}
